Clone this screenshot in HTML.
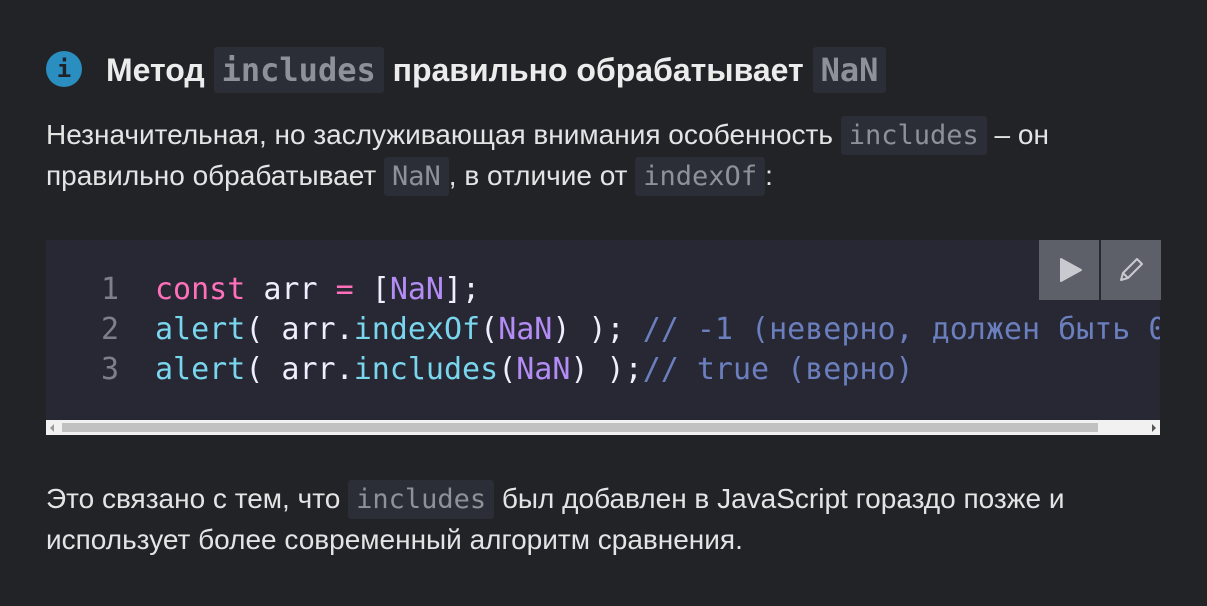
<!DOCTYPE html>
<html><head><meta charset="utf-8"><style>
body{margin:0;background:#222327;width:1207px;height:606px;overflow:hidden;font-family:"Liberation Sans",sans-serif;color:#e4e4e4;position:relative}
.ic{position:absolute;left:46px;top:51px;width:36px;height:36px;border-radius:50%;background:#2a8ec0;color:#1f2226;font:bold 24px "DejaVu Sans Mono",monospace;text-align:center;line-height:36px}
h2{position:absolute;left:106px;top:46px;margin:0;font-size:32px;font-weight:bold;line-height:48px;white-space:nowrap;color:#ececec}
code{font-family:"DejaVu Sans Mono",monospace;background:#2b2d37;color:#8e9199;border-radius:3px}
h2 code{font-size:32px;font-weight:bold;padding:4px 8px}
p{position:absolute;left:46px;margin:0;font-size:28px;line-height:41px;white-space:nowrap}
p code{font-size:27px;padding:4px 8px}
.pre{position:absolute;left:46px;top:240px;width:1114px;height:180px;background:#272833;overflow:hidden}
.ln{position:absolute;left:101px;top:270px;font:30px/40px "DejaVu Sans Mono",monospace;color:#7d8088}
.cd{position:absolute;left:155px;top:270px;font:30px/40px "DejaVu Sans Mono",monospace;color:#eef;white-space:pre}
.k{color:#ff6fba}.f{color:#79d6ee}.n{color:#b48cf5}.c{color:#6b7fbf}
.sb{position:absolute;left:46px;top:420px;width:1114px;height:15px;background:#f1f1f1}
.th{position:absolute;left:62px;top:423px;width:1036px;height:9px;background:#c1c1c1}
.b{position:absolute;top:240px;width:60px;height:60px;background:#5d5f69}
</style></head><body>
<div class="ic">i</div>
<h2>Метод <code>includes</code> правильно обрабатывает <code>NaN</code></h2>
<p style="top:114px">Незначительная, но заслуживающая внимания особенность <code>includes</code> – он</p>
<p style="top:155px">правильно обрабатывает <code>NaN</code>, в отличие от <code>indexOf</code>:</p>
<div class="pre"></div>
<div class="ln">1<br>2<br>3</div>
<div class="cd" style="width:1005px;overflow:hidden"><span class="k">const</span> arr <span class="k">=</span> [<span class="n">NaN</span>];
<span class="f">alert</span>( arr.<span class="f">indexOf</span>(<span class="n">NaN</span>) ); <span class="c">// -1 (неверно, должен быть 0)</span>
<span class="f">alert</span>( arr.<span class="f">includes</span>(<span class="n">NaN</span>) );<span class="c">// true (верно)</span></div>
<div class="b" style="left:1039px"><svg width="60" height="60"><path d="M22 19L42 30L22 41Z" fill="#c9cad0" stroke="#c9cad0" stroke-linejoin="round" stroke-width="2"/></svg></div>
<div class="b" style="left:1101px"><svg width="60" height="60"><path d="M20 40L22 33L36 19L41 24L27 38Z M22 33L27 38" fill="none" stroke="#c9cad0" stroke-width="2" stroke-linejoin="round"/></svg></div>
<div class="sb"></div><div class="th"></div>
<div style="position:absolute;left:50px;top:424px;border:4px solid transparent;border-right-color:#999;border-left:0"></div>
<div style="position:absolute;left:1152px;top:424px;border:4px solid transparent;border-left-color:#555;border-right:0"></div>
<p style="top:478px">Это связано с тем, что <code>includes</code> был добавлен в JavaScript гораздо позже и</p>
<p style="top:519px">использует более современный алгоритм сравнения.</p>
</body></html>
